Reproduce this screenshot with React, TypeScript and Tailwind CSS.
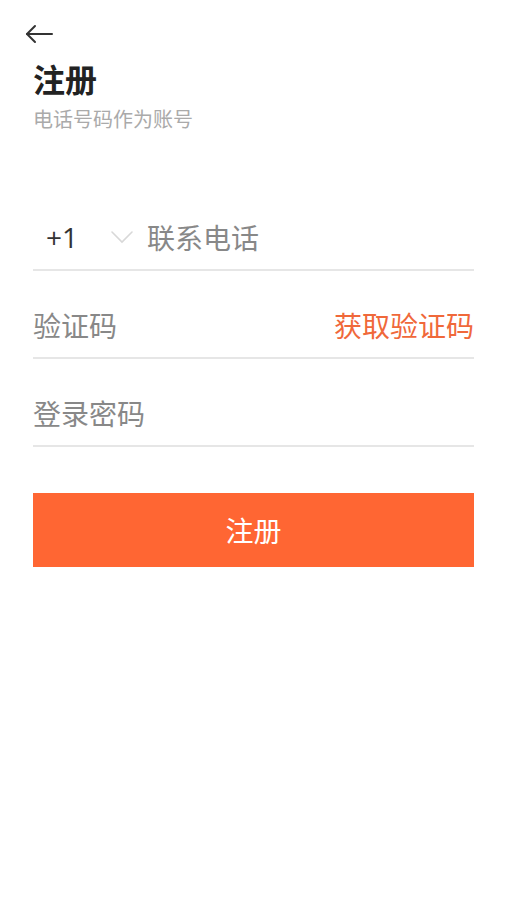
export default function App() {
  const font = { fontFamily: '"Noto Sans CJK SC", "Noto Sans", sans-serif' };
  return (
    <div className="min-h-[900px] w-[507px] bg-white" style={font}>
      <div className="px-[33px] pt-[22px]">
        <button className="-ml-[10px] flex h-[24px] w-[32px] items-center justify-center text-[#333]">
          <svg width="30" height="22" viewBox="0 0 30 22" fill="none" stroke="currentColor" strokeWidth="2" strokeLinecap="round" strokeLinejoin="round">
            <path d="M28 11H3" />
            <path d="M11 3L3 11L11 19" />
          </svg>
        </button>
        <h1 className="mt-[12px] text-[32px] leading-[40px] font-bold text-[#222]">注册</h1>
        <p className="mt-[7px] text-[20px] leading-[28px] text-[#aaa]">电话号码作为账号</p>

        <div className="mt-[50px]">
          <div className="flex items-center border-b-2 border-[#e6e6e6] pt-9 pb-[14px] text-[28px] leading-[36px]">
            <span className="ml-[13px] w-[64px] text-[#333]" style={{ fontFamily: '"Open Sans", "Noto Sans", sans-serif' }}>+1</span>
            <svg width="24" height="14" viewBox="0 0 24 14" fill="none" stroke="#d8d8d8" strokeWidth="1.6" strokeLinecap="round">
              <path d="M2 2L12 12L22 2" />
            </svg>
            <span className="ml-[13px] text-[#888]">联系电话</span>
          </div>
          <div className="flex items-center justify-between border-b-2 border-[#e6e6e6] pt-9 pb-[14px] text-[28px] leading-[36px]">
            <span className="text-[#888]">验证码</span>
            <span className="text-[#f0683a]">获取验证码</span>
          </div>
          <div className="flex items-center border-b-2 border-[#e6e6e6] pt-9 pb-[14px] text-[28px] leading-[36px]">
            <span className="text-[#888]">登录密码</span>
          </div>
        </div>

        <button className="mt-[46px] flex h-[74px] w-full items-center justify-center bg-[#ff6633] text-[28px] text-white">
          注册
        </button>
      </div>
    </div>
  );
}
